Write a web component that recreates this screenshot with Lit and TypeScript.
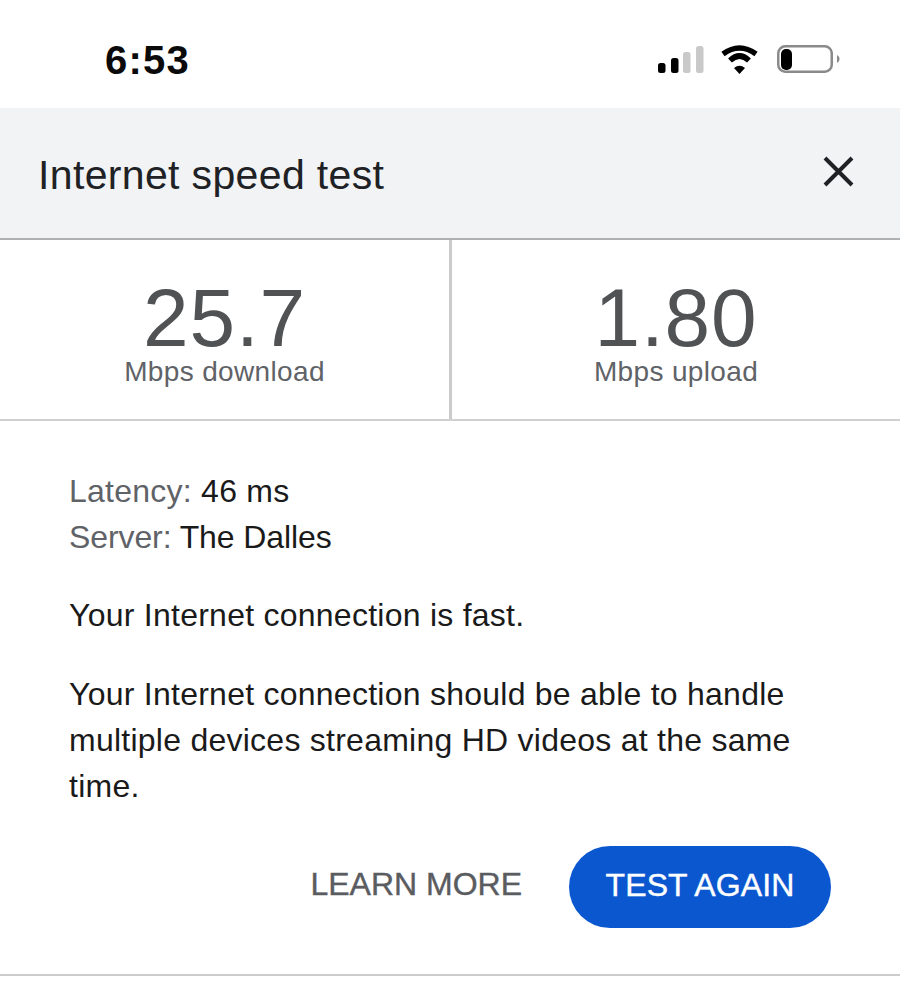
import { LitElement, html, css } from "lit";
import { customElement } from "lit/decorators.js";

@customElement("app-root")
export class AppRoot extends LitElement {
  static styles = css`
    :host { display: block; width: 900px; height: 984px; background: #fff; font-family: "Liberation Sans", Arial, sans-serif; color: #202124; overflow: hidden; }
    .status { height: 108px; display: flex; align-items: flex-start; justify-content: space-between; box-sizing: border-box; padding: 39px 60px 0 105px; }
    .time { font-size: 40px; line-height: 42px; font-weight: 700; color: #0a0a0a; letter-spacing: 1.2px; }
    .status svg { display: block; margin-top: 5px; }
    .header { height: 130px; box-sizing: border-box; background: #f1f3f4; display: flex; align-items: center; justify-content: space-between; padding: 0 45px 0 38px; }
    .title { font-size: 41px; line-height: 44px; color: #202124; letter-spacing: 0.35px; margin-top: 4px; }
    .close { display: block; margin-bottom: 4px; }
    .stats { display: grid; grid-template-columns: 449px 3px 448px; height: 183px; box-sizing: border-box; border-top: 2px solid #b0b0b0; border-bottom: 2px solid #d0d0d0; }
    .divider { background: #cbcbcb; }
    .stat { display: flex; flex-direction: column; align-items: center; padding-top: 41px; box-sizing: border-box; }
    .num { font-size: 82px; line-height: 74px; color: #505254; letter-spacing: 0.8px; }
    .unit { font-size: 28px; line-height: 32px; color: #5f6368; letter-spacing: 0.35px; margin-top: 1px; }
    .body { padding: 47px 69px 0; font-size: 32px; line-height: 46px; color: #1a1a1a; letter-spacing: 0.25px; }
    .meta span { color: #5f6368; }
    .server { letter-spacing: -0.1px; }
    p { margin: 0; }
    .meta { margin-bottom: 32px; }
    .fast { margin-bottom: 33px; }
    .actions { display: flex; justify-content: flex-end; align-items: center; gap: 47px; margin-top: 37px; letter-spacing: 0; }
    .learn { font-size: 32px; color: #5a5c5f; line-height: 38px; -webkit-text-stroke: 0.4px #5a5c5f; margin-top: -6px; }
    .again { box-sizing: border-box; width: 262px; height: 82px; border-radius: 41px; background: #0b57d0; color: #fff; font-size: 32px; letter-spacing: 0.1px; -webkit-text-stroke: 0.4px #fff; display: flex; align-items: center; justify-content: center; padding-bottom: 4px; }
    .bottom { height: 2px; background: #cccccc; margin-top: 46px; }
  `;

  render() {
    return html`
      <div class="status">
        <div class="time">6:53</div>
        <svg width="182" height="34" viewBox="0 0 182 34">
          <rect x="0" y="19" width="7.500" height="10" rx="2.500" fill="#000"/>
          <rect x="13" y="14" width="7.500" height="15" rx="2.500" fill="#000"/>
          <rect x="25" y="8" width="7.500" height="21" rx="2.500" fill="#c9c9c9"/>
          <rect x="38" y="2" width="7.500" height="27" rx="2.500" fill="#c9c9c9"/>
          <g fill="none" stroke="#000" stroke-width="5.500">
            <path d="M65 10 Q81.500 -2 98 10"/>
            <path d="M72 16.500 Q81.500 7.500 91 16.500"/>
          </g>
          <path d="M76 24 Q81.500 19.500 87 24 L81.500 30 Z" fill="#000"/>
          <rect x="120.250" y="2.250" width="53.500" height="25.500" rx="7" fill="#fff" stroke="#8a8a8a" stroke-width="2.500"/>
          <rect x="123" y="5" width="11" height="21" rx="5" fill="#000"/>
          <path d="M179 11 C181 12 181.500 14 181.500 15 C181.500 16 181 18 179 19 Z" fill="#8a8a8a"/>
        </svg>
      </div>
      <div class="header">
        <div class="title">Internet speed test</div>
        <svg class="close" width="34" height="34" viewBox="0 0 34 34"><path d="M4 4 L31 31 M31 4 L4 31" stroke="#202124" stroke-width="4" fill="none"/></svg>
      </div>
      <div class="stats">
        <div class="stat"><div class="num">25.7</div><div class="unit">Mbps download</div></div>
        <div class="divider"></div>
        <div class="stat"><div class="num">1.80</div><div class="unit">Mbps upload</div></div>
      </div>
      <div class="body">
        <div class="meta"><div><span>Latency:</span> 46 ms</div><div class="server"><span>Server:</span> The Dalles</div></div>
        <p class="fast">Your Internet connection is fast.</p>
        <p>Your Internet connection should be able to handle multiple devices streaming HD videos at the same time.</p>
        <div class="actions"><div class="learn">LEARN MORE</div><div class="again">TEST AGAIN</div></div>
      </div>
      <div class="bottom"></div>
    `;
  }
}
